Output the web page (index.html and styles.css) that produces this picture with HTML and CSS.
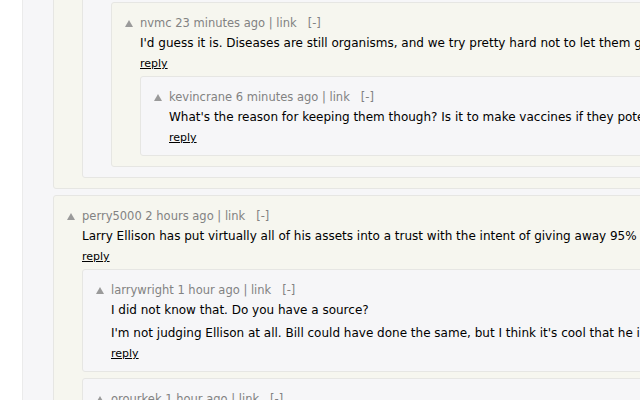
FILE: index.html
```html
<!DOCTYPE html>
<html>
<head>
<meta charset="utf-8">
<link rel="stylesheet" href="styles.css">
</head>
<body>
<div class="page">
  <div class="thread first">
    <div class="box beige">
      <div class="box lav">
        <div class="box beige">
          <div class="head"><svg class="vote" width="8" height="7" viewBox="0 0 8 7"><polygon points="4,0 8,7 0,7"/></svg><span>nvmc 23 minutes ago | link&nbsp;&nbsp;&nbsp;[-]</span></div>
          <p class="text">I'd guess it is. Diseases are still organisms, and we try pretty hard not to let them go extinct, even the nasty ones.</p>
          <a class="reply" href="#">reply</a>
          <div class="box lav">
            <div class="head"><svg class="vote" width="8" height="7" viewBox="0 0 8 7"><polygon points="4,0 8,7 0,7"/></svg><span>kevincrane 6 minutes ago | link&nbsp;&nbsp;&nbsp;[-]</span></div>
            <p class="text">What's the reason for keeping them though? Is it to make vaccines if they potentially come back somehow?</p>
            <a class="reply" href="#">reply</a>
          </div>
        </div>
      </div>
    </div>
  </div>
  <div class="thread">
    <div class="box beige">
      <div class="head"><svg class="vote" width="8" height="7" viewBox="0 0 8 7"><polygon points="4,0 8,7 0,7"/></svg><span>perry5000 2 hours ago | link&nbsp;&nbsp;&nbsp;[-]</span></div>
      <p class="text">Larry Ellison has put virtually all of his assets into a trust with the intent of giving away 95% of his wealth.</p>
      <a class="reply" href="#">reply</a>
      <div class="box lav">
        <div class="head"><svg class="vote" width="8" height="7" viewBox="0 0 8 7"><polygon points="4,0 8,7 0,7"/></svg><span>larrywright 1 hour ago | link&nbsp;&nbsp;&nbsp;[-]</span></div>
        <p class="text">I did not know that. Do you have a source?</p>
        <p class="text para">I'm not judging Ellison at all. Bill could have done the same, but I think it's cool that he is doing this.</p>
        <a class="reply" href="#">reply</a>
      </div>
      <div class="box lav">
        <div class="head"><svg class="vote" width="8" height="7" viewBox="0 0 8 7"><polygon points="4,0 8,7 0,7"/></svg><span>orourkek 1 hour ago | link&nbsp;&nbsp;&nbsp;[-]</span></div>
        <p class="text">Here is a source for that claim.</p>
        <a class="reply" href="#">reply</a>
      </div>
    </div>
  </div>
</div>
</body>
</html>
```
FILE: styles.css
```css
html, body {
  margin: 0;
  padding: 0;
  background: #ffffff;
  overflow: hidden;
  height: 400px;
}
body {
  font-family: "DejaVu Sans", Verdana, sans-serif;
  width: 1400px;
}
.page {
  margin-left: 22px;
  border-left: 1px solid #ebebeb;
  background: #f6f6f8;
  padding-left: 30px;
  height: 400px;
  display: flex;
  flex-direction: column;
}
.thread {
  margin-bottom: 6px;
}
.thread.first {
  margin-top: -24px;
}
.box {
  border: 1px solid #e6e6e3;
  border-radius: 3px;
  padding: 12px 0 10px 28px;
  display: flex;
  flex-direction: column;
  align-items: flex-start;
}
.box > .box {
  align-self: stretch;
  margin-top: 5px;
}
.box > .box + .box {
  margin-top: 6px;
}
.beige {
  background: #f6f6ef;
}
.lav {
  background: #f6f6f8;
}
.thread.first > .box > .box,
.thread.first > .box > .box > .box:first-child {
  margin-top: 0;
}
.head {
  display: flex;
  align-items: center;
  height: 16px;
  font-size: 11.5px;
  color: #828282;
  white-space: nowrap;
}
.vote {
  margin-left: -15px;
  margin-right: 7px;
  fill: #9a9a9a;
  flex: none;
}
.text {
  margin: 3px 0 0;
  font-size: 12px;
  line-height: 18px;
  color: #000;
  white-space: nowrap;
}
.text.para {
  margin-top: 5px;
}
.reply {
  margin-top: 5px;
  font-size: 11px;
  line-height: 14px;
  color: #000;
  text-decoration: underline;
}
```
